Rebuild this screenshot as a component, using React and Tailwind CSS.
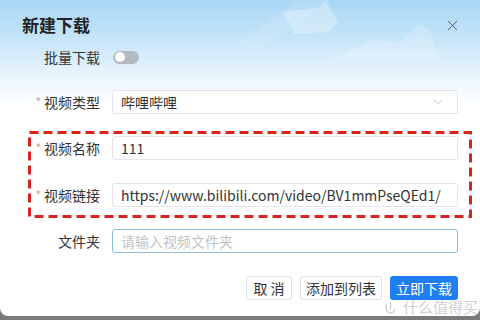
import React from "react";
import { ChevronDown, X } from "lucide-react";

const font = { fontFamily: '"Noto Sans CJK SC", "Noto Sans", sans-serif' };

function Label({ text, required }) {
    return (
        <div className="w-[70px] shrink-0 flex items-center justify-end text-[14px] text-[#333]">
            {required && <span className="mr-[3px] text-[12px] text-[#e39a9a]">*</span>}
            <span>{text}</span>
        </div>
    );
}

function Field({ children, focused }) {
    return (
        <div
            className={
                "w-[346px] h-[24px] bg-white rounded-[3px] flex items-center px-[8px] text-[14px] text-[#333] " +
                (focused ? "border border-[#8dc0df]" : "border border-[#e3e5e8]")
            }
        >
            {children}
        </div>
    );
}

function Row({ label, required, children, className }) {
    return (
        <div className={"flex items-center gap-[12px] pl-[30px] " + (className || "")}>
            <Label text={label} required={required} />
            {children}
        </div>
    );
}

function HeaderArt() {
    return (
        <svg className="absolute left-0 top-0 pointer-events-none" width="480" height="90" viewBox="0 0 480 90">
            <polygon points="235,45 300,0 330,0 260,50" fill="#ffffff" opacity="0.12" />
            <polygon points="282,12 318,8 326,1 338,22 328,32 294,34 290,24" fill="#ffffff" opacity="0.3" />
            <polygon points="330,60 370,40 400,42 418,24 430,30 440,60" fill="#ffffff" opacity="0.2" />
        </svg>
    );
}

// red dashed annotation drawn over the two fields
function DashedBox() {
    return (
        <svg className="absolute left-0 top-0 pointer-events-none" width="480" height="316">
            <rect x="29.5" y="132.5" width="441" height="84" fill="none" stroke="#d8241c" strokeWidth="3" strokeDasharray="9 5" />
        </svg>
    );
}

export default function App() {
    return (
        <div className="w-[480px] h-[320px] bg-[#7a7a7a] overflow-hidden relative" style={font}>
            <div className="relative h-[316px] rounded-b-[8px] bg-[linear-gradient(180deg,#a9d7f5_0%,#c4e4f8_12%,#e3f2fc_22%,#f8fcff_30%,#ffffff_34%)] overflow-hidden">
                <HeaderArt />
                <div className="relative flex flex-col">
                    <div className="flex items-center justify-between pl-[22px] pr-[19px] pt-[14px] h-[36px]">
                        <h1 className="text-[17px] font-bold text-[#222] leading-[20px]">新建下载</h1>
                        <X size={17} strokeWidth={1.3} className="text-[#4b5560]" />
                    </div>

                    <Row label="批量下载" className="mt-[9px] h-[24px]">
                        <div className="w-[26px] h-[13px] rounded-full bg-[#b3b9c0] flex items-center px-[2px] ml-[1px]">
                            <div className="w-[10px] h-[10px] rounded-full bg-white" />
                        </div>
                    </Row>

                    <Row label="视频类型" required className="mt-[21px]">
                        <Field>
                            <span className="flex-1">哔哩哔哩</span>
                            <ChevronDown size={14} strokeWidth={1.2} className="text-[#a5abb2] mr-[4px]" />
                        </Field>
                    </Row>

                    <Row label="视频名称" required className="mt-[22px]">
                        <Field>111</Field>
                    </Row>

                    <Row label="视频链接" required className="mt-[23px]">
                        <Field>https://www.bilibili.com/video/BV1mmPseQEd1/</Field>
                    </Row>

                    <Row label="文件夹" className="mt-[22px]">
                        <Field focused>
                            <span className="text-[#bfc3c8]">请输入视频文件夹</span>
                        </Field>
                    </Row>

                    <div className="flex justify-end gap-[8px] pr-[22px] mt-[23px] text-[14px]">
                        <button className="w-[46px] h-[24px] border border-[#e0e2e5] rounded-[3px] bg-white text-[#333]">取 消</button>
                        <button className="w-[82px] h-[24px] border border-[#e0e2e5] rounded-[3px] bg-white text-[#333]">添加到列表</button>
                        <button className="w-[68px] h-[24px] rounded-[3px] bg-[#1f7ff2] text-white">立即下载</button>
                    </div>
                </div>

                <DashedBox />

                {/* watermark */}
                <div className="absolute right-[2px] bottom-[0px] flex items-center gap-[5px] text-[15px] leading-[18px] text-[#cfd1d4]">
                    <svg width="15" height="15" viewBox="0 0 14 14" fill="none" stroke="#cfd1d4" strokeWidth="1.4">
                        <path d="M3 4 v4 a4 4 0 0 0 8 0" />
                        <path d="M7 2 v7" />
                    </svg>
                    <span>什么值得买</span>
                </div>
            </div>
        </div>
    );
}
